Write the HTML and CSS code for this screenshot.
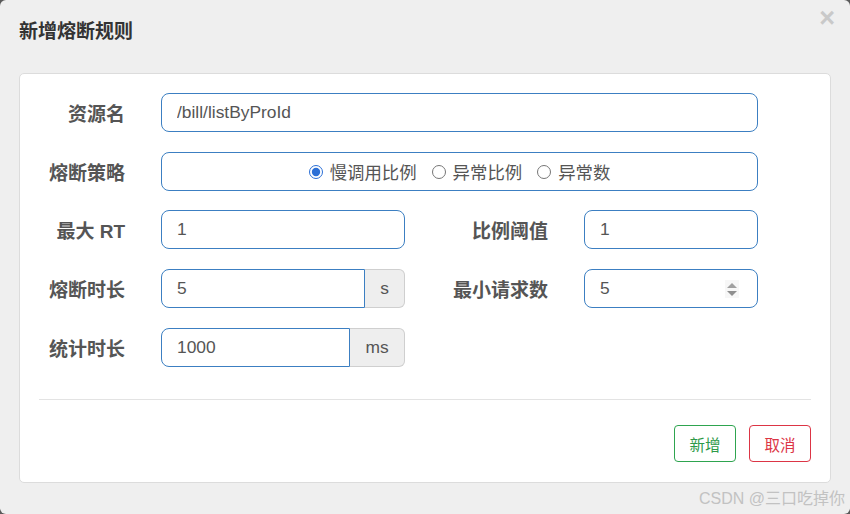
FILE: index.html
```html
<!DOCTYPE html>
<html lang="zh-CN">
<head>
<meta charset="utf-8">
<title>新增熔断规则</title>
<link rel="stylesheet" href="styles.css">
</head>
<body>
<div class="modal">
  <div class="modal-header">
    <h3 class="title">新增熔断规则</h3>
    <span class="close">×</span>
  </div>
  <div class="card">
    <div class="form">
      <div class="row">
        <label class="label">资源名</label>
        <input class="input full" type="text" value="/bill/listByProId">
      </div>
      <div class="row">
        <label class="label">熔断策略</label>
        <div class="input full radios">
          <label class="radio"><input type="radio" name="g" checked><span>慢调用比例</span></label>
          <label class="radio"><input type="radio" name="g"><span>异常比例</span></label>
          <label class="radio"><input type="radio" name="g"><span>异常数</span></label>
        </div>
      </div>
      <div class="row">
        <label class="label">最大 RT</label>
        <input class="input half" type="text" value="1">
        <label class="label label-right">比例阈值</label>
        <input class="input small" type="text" value="1">
      </div>
      <div class="row">
        <label class="label">熔断时长</label>
        <div class="group half">
          <input class="input grow" type="text" value="5">
          <span class="addon addon-s">s</span>
        </div>
        <label class="label label-right">最小请求数</label>
        <div class="input small number">
          <input class="bare" type="text" value="5">
          <svg class="spin" width="14" height="18" viewBox="0 0 14 18"><path d="M7 3 L12 8 L2 8 Z" fill="#a0a0a0"/><path d="M2 11 L12 11 L7 16 Z" fill="#8f8f8f"/></svg>
        </div>
      </div>
      <div class="row">
        <label class="label">统计时长</label>
        <div class="group half">
          <input class="input grow" type="text" value="1000">
          <span class="addon addon-ms">ms</span>
        </div>
      </div>
    </div>
    <hr class="divider">
    <div class="footer">
      <button class="btn btn-ok">新增</button>
      <button class="btn btn-cancel">取消</button>
    </div>
  </div>
  <div class="watermark">CSDN @三口吃掉你</div>
</div>
</body>
</html>
```

FILE: styles.css
```css
* { box-sizing: border-box; }
html, body { margin: 0; padding: 0; }
body {
  background: #5a5a5a;
  width: 850px;
  height: 514px;
  overflow: hidden;
  font-family: "Liberation Sans", "Noto Sans CJK SC", sans-serif;
}
.modal {
  position: relative;
  width: 850px;
  height: 514px;
  background: #efefef;
  border-radius: 6px;
  display: flex;
  flex-direction: column;
}
.modal-header {
  height: 73px;
  display: flex;
  justify-content: space-between;
  align-items: flex-start;
  padding: 0 15px 0 19px;
}
.title {
  margin: 19px 0 0 0;
  font-family: "Liberation Sans", "Noto Sans CJK SC", sans-serif;
  font-size: 19px;
  line-height: 26px;
  font-weight: bold;
  color: #333;
}
.close {
  margin-top: 3px;
  font-size: 27px;
  line-height: 30px;
  font-weight: bold;
  color: #c9c9c9;
}
.card {
  margin: 0 19px;
  height: 410px;
  background: #fff;
  border: 1px solid #dcdcdc;
  border-radius: 5px;
  display: flex;
  flex-direction: column;
}
.form {
  padding: 19px 0 0 19px;
  display: flex;
  flex-direction: column;
  gap: 20px;
}
.row {
  display: flex;
  align-items: center;
  height: 39px;
}
.row:nth-child(3) { margin-top: -1px; }
.label {
  width: 86px;
  margin-right: 36px;
  text-align: right;
  font-family: "Liberation Sans", "Noto Sans CJK SC", sans-serif;
  font-weight: bold;
  font-size: 19px;
  color: #555;
  white-space: nowrap;
}
.label-right { width: 143px; }
.input {
  height: 39px;
  border: 1px solid #3c7fc2;
  border-radius: 8px;
  padding: 0 15px;
  font-family: "Liberation Sans", "Noto Sans CJK SC", sans-serif;
  font-size: 17.4px;
  color: #555;
  background: #fff;
  outline: none;
}
.full { width: 597px; }
.half { width: 244px; }
.small { width: 174px; }
.radios {
  display: flex;
  align-items: center;
  justify-content: center;
  gap: 15px;
}
.radio {
  display: flex;
  align-items: center;
  font-size: 17.4px;
  color: #555;
  font-family: "Noto Sans CJK SC", sans-serif;
}
.radio input {
  margin: 0 7px 0 0;
  width: 14px;
  height: 14px;
  accent-color: #2b6fd6;
}
.group {
  display: flex;
  height: 39px;
}
.grow {
  flex: 1;
  min-width: 0;
  border-radius: 8px 0 0 8px;
}
.addon {
  display: flex;
  align-items: center;
  justify-content: center;
  background: #eeeeee;
  border: 1px solid #cfcfcf;
  border-left: none;
  border-radius: 0 6px 6px 0;
  font-size: 17.4px;
  color: #555;
}
.addon-s { width: 40px; }
.addon-ms { width: 55px; }
.number {
  display: flex;
  align-items: center;
  padding-right: 18px;
}
.bare {
  border: none;
  outline: none;
  padding: 0;
  flex: 1;
  min-width: 0;
  font-family: "Liberation Sans", sans-serif;
  font-size: 17.4px;
  color: #555;
  background: transparent;
}
.spin { display: block; background: #f7f7f7; }
.divider {
  margin: 32px 19px 0 19px;
  border: none;
  border-top: 1px solid #e3e3e3;
  height: 0;
}
.footer {
  display: flex;
  justify-content: flex-end;
  gap: 13px;
  padding: 25px 19px 0 0;
}
.btn {
  width: 62px;
  height: 37px;
  background: #fff;
  border-radius: 4px;
  font-family: "Noto Sans CJK SC", sans-serif;
  font-size: 15.5px;
  padding: 0;
}
.btn-ok { border: 1px solid #2ea44f; color: #2e9a48; }
.btn-cancel { border: 1px solid #dc3545; color: #dc3545; }
.watermark {
  position: absolute;
  right: 5px;
  bottom: 5px;
  font-family: "Liberation Sans", "Noto Sans CJK SC", sans-serif;
  font-size: 16px;
  color: #c2c2c2;
}
```
